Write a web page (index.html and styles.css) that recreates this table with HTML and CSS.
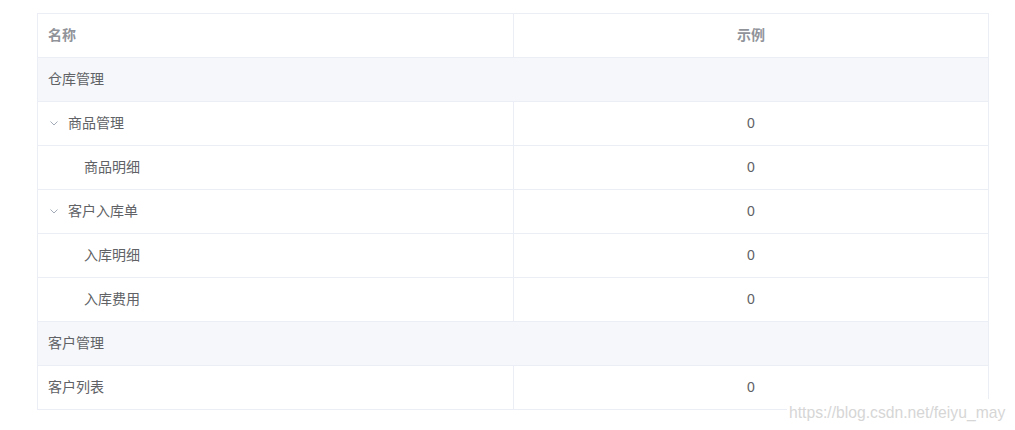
FILE: index.html
```html
<!DOCTYPE html>
<html lang="zh">
<head>
<meta charset="utf-8">
<title>表格</title>
<link rel="stylesheet" href="styles.css">
</head>
<body>
<div class="page">
  <div class="table">
    <div class="cell head">名称</div>
    <div class="cell head center">示例</div>

    <div class="cell span">仓库管理</div>

    <div class="cell"><span class="arrow"><svg width="8" height="5" viewBox="0 0 8 5"><polyline points="0.5,0.5 4,4 7.5,0.5" fill="none" stroke="#a3aab8" stroke-width="1"/></svg></span>商品管理</div>
    <div class="cell center num">0</div>

    <div class="cell child">商品明细</div>
    <div class="cell center num">0</div>

    <div class="cell"><span class="arrow"><svg width="8" height="5" viewBox="0 0 8 5"><polyline points="0.5,0.5 4,4 7.5,0.5" fill="none" stroke="#a3aab8" stroke-width="1"/></svg></span>客户入库单</div>
    <div class="cell center num">0</div>

    <div class="cell child">入库明细</div>
    <div class="cell center num">0</div>

    <div class="cell child">入库费用</div>
    <div class="cell center num">0</div>

    <div class="cell span">客户管理</div>

    <div class="cell">客户列表</div>
    <div class="cell center num">0</div>
  </div>
  <div class="watermark">https://blog.csdn.net/feiyu_may</div>
</div>
</body>
</html>
```

FILE: styles.css
```css
html, body {
  margin: 0;
  padding: 0;
  background: #fff;
}

.page {
  position: relative;
  width: 1015px;
  height: 430px;
  padding: 13px 0 0 37px;
  box-sizing: border-box;
  font-family: "Liberation Sans", "Noto Sans CJK SC", sans-serif;
  font-size: 14px;
  color: #606266;
}

.table {
  display: grid;
  grid-template-columns: 476px 475px;
  width: 952px;
  box-sizing: border-box;
  border-top: 1px solid #ebeef5;
  border-left: 1px solid #ebeef5;
}

.cell {
  height: 44px;
  box-sizing: border-box;
  border-right: 1px solid #ebeef5;
  border-bottom: 1px solid #ebeef5;
  display: flex;
  align-items: center;
  padding-left: 10px;
  padding-bottom: 4px;
  background: #fff;
}

.center {
  justify-content: center;
  padding-left: 0;
}

.num {
  padding-bottom: 2px;
}

.head {
  color: #909399;
  font-weight: bold;
}

.span {
  grid-column: 1 / -1;
  background: #f5f7fa;
}

.child {
  padding-left: 46px;
}

.arrow {
  width: 20px;
  height: 20px;
  display: inline-flex;
  align-items: center;
  padding-left: 2px;
  box-sizing: border-box;
  margin-top: 3px;
}

.arrow svg {
  display: block;
}

.watermark {
  position: absolute;
  left: 787px;
  top: 399px;
  width: 228px;
  height: 31px;
  background: #fff;
  color: #d6d6d6;
  font-family: "Liberation Sans", sans-serif;
  font-size: 15.7px;
  line-height: 28px;
  padding-left: 2px;
  box-sizing: border-box;
  white-space: nowrap;
}
```
